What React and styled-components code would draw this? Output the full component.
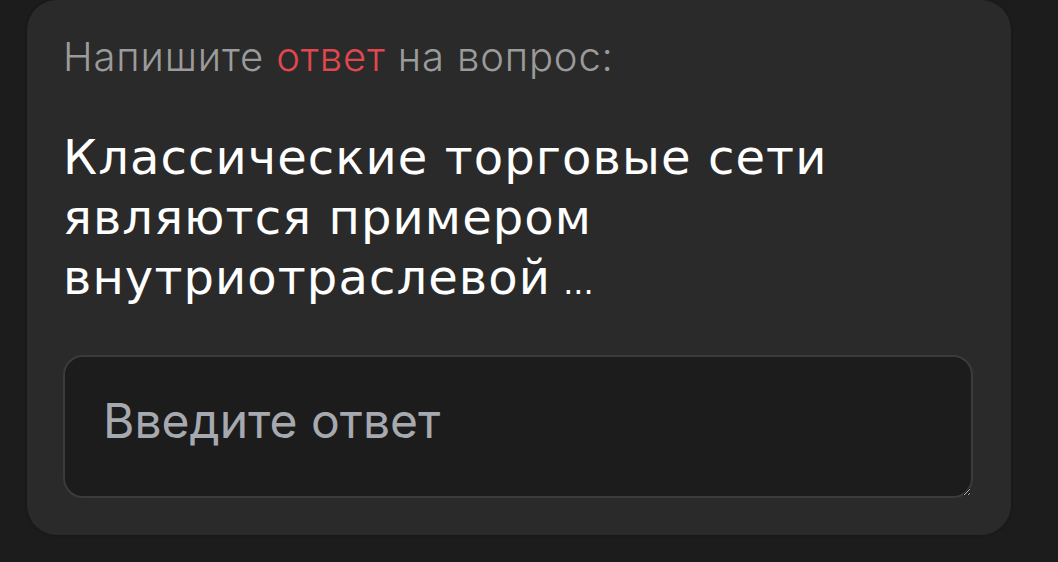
import React from "react";
import styled, { createGlobalStyle } from "styled-components";

const GlobalStyle = createGlobalStyle`
  html, body {
    margin: 0;
    padding: 0;
    background: #1c1c1c;
  }
  * { box-sizing: border-box; }
`;

const Page = styled.main`
  padding: 0 47px 28px 27px;
`;

const Card = styled.section`
  background: #2a2a2a;
  border-radius: 30px;
  padding: 33px 38px 37px 36px;
  box-shadow: 0 0 3px rgba(0, 0, 0, 0.35);
`;

const Prompt = styled.p`
  margin: 0;
  font-family: Inter, "Noto Sans", sans-serif;
  font-weight: 300;
  font-size: 40px;
  line-height: 48px;
  letter-spacing: 0.85px;
  color: #9b9b9b;
`;

const Accent = styled.span`
  color: #e0474f;
`;

const Question = styled.h2`
  margin: 46px 0 0;
  font-family: "DejaVu Sans", "Open Sans", sans-serif;
  font-weight: 400;
  font-size: 48px;
  line-height: 60px;
  letter-spacing: 1.1px;
  color: #ffffff;
  max-width: 840px;
`;

/* compact trailing dots after the question */
const Dots = styled.span`
  margin-left: 2px;
  font-size: 32px;
  line-height: 1;
  letter-spacing: 0;
`;

const AnswerField = styled.textarea`
  display: block;
  width: 100%;
  height: 143px;
  margin-top: 48px;
  padding: 35px 38px;
  background: #1c1c1c;
  border: 2px solid #3b3b3b;
  border-radius: 20px;
  color: #ffffff;
  font-family: Inter, "Noto Sans", sans-serif;
  font-size: 48px;
  line-height: 58px;
  outline: none;

  &::placeholder {
    color: #a6a9b0;
  }
`;

export default function App() {
  return (
    <>
      <GlobalStyle />
      <Page>
        <Card>
          <Prompt>
            Напишите <Accent>ответ</Accent> на вопрос:
          </Prompt>
          <Question>
            Классические торговые сети являются примером внутриотраслевой
            <Dots> ...</Dots>
          </Question>
          <AnswerField placeholder="Введите ответ" />
        </Card>
      </Page>
    </>
  );
}
